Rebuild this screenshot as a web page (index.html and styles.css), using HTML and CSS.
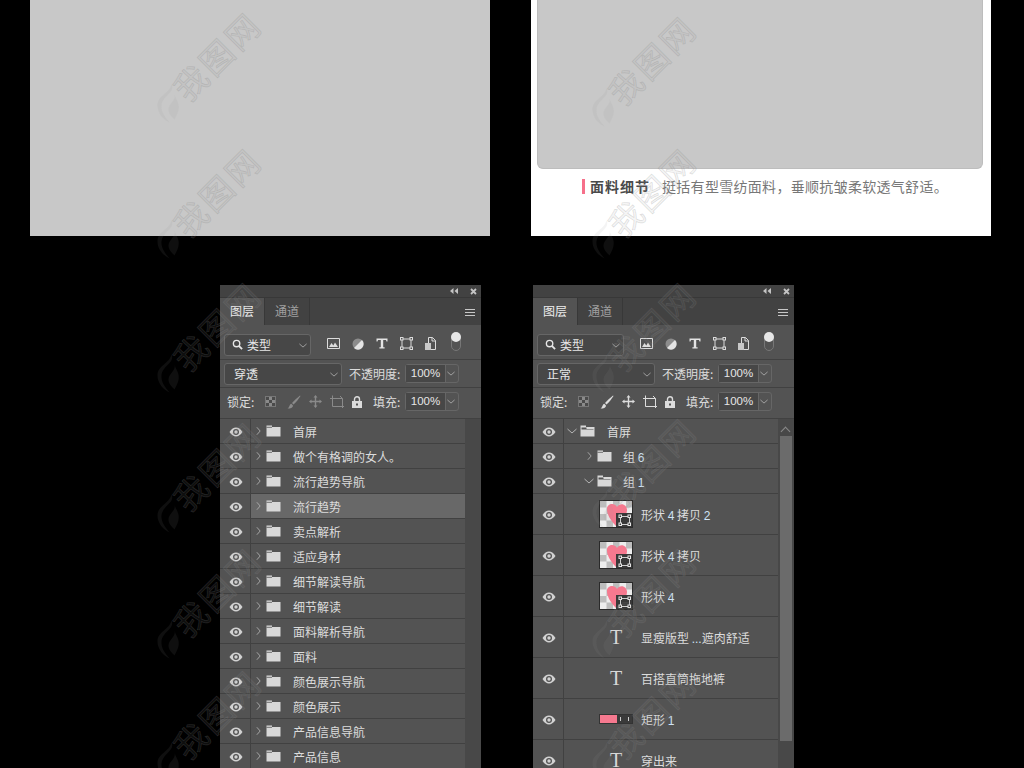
FILE: index.html
```html
<!DOCTYPE html>
<html lang="zh-CN">
<head>
  <meta charset="UTF-8">
  <title>图层面板</title>
  <link rel="stylesheet" href="styles.css">
</head>
<body>

  <svg class="defs" width="0" height="0">
    <symbol id="eye" viewBox="0 0 14 10">
      <path d="M0.5 5C2.5 2 4.6 0.6 7 0.6S11.5 2 13.5 5C11.5 8 9.4 9.4 7 9.4S2.5 8 0.5 5Z" fill="#d2d2d2"/>
      <circle cx="7" cy="5" r="3" fill="#535353"/>
      <circle cx="7" cy="5" r="1.7" fill="#d2d2d2"/>
    </symbol>
    <symbol id="folder" viewBox="0 0 15 12">
      <path d="M0.5 0.5H6V2H14.5V11.5H0.5Z" fill="#d8d8d8"/>
      <path d="M0.5 2.3H6" stroke="#535353" stroke-width="0.8"/>
    </symbol>
    <symbol id="folder-open" viewBox="0 0 15 12">
      <path d="M0.5 0.5H6V2H14.5V11.5H0.5Z" fill="#d8d8d8"/>
      <path d="M1.5 2.6H6.5V4H13.5V4.6H1.5Z" fill="#535353"/>
    </symbol>
    <symbol id="chev-right" viewBox="0 0 6 10"><path d="M1 0.5L5 5L1 9.5" fill="none" stroke="#b4b4b4"/></symbol>
    <symbol id="chev-down" viewBox="0 0 10 6"><path d="M0.5 1L5 5L9.500 1" fill="none" stroke="#b4b4b4"/></symbol>
    <symbol id="flame" viewBox="0 0 24 40">
      <path d="M15 1C19 9 6 12 5 22C4.500 29 9 34 13 39C7 36 1 30 1 22C1 12 13 10 15 1ZM18 11C20 17 12 20 12 26C12 30 15 33 18 36C21 30 23 27 22 21C21 17 19 15 18 11Z" fill="currentColor"/>
    </symbol>
    <symbol id="shape-badge" viewBox="0 0 16 14">
      <rect width="16" height="14" fill="#383838"/>
      <path d="M4.500 3.500H13.500V11.500H4.500Z" fill="none" stroke="#cfcfcf"/>
      <g fill="#383838" stroke="#e4e4e4"><rect x="3" y="2" width="2.500" height="2.500"/><rect x="12" y="2" width="2.500" height="2.500"/><rect x="3" y="10" width="2.500" height="2.500"/><rect x="12" y="10" width="2.500" height="2.500"/></g>
    </symbol>
    <symbol id="thumb" viewBox="0 0 32 26">
      <rect width="32" height="26" fill="#ededed"/>
      <path d="M0 0H6.500V6.500H0ZM13 0H19.500V6.500H13ZM26 0H32V6.500H26ZM6.500 6.500H13V13H6.500ZM19.500 6.500H26V13H19.500ZM0 13H6.500V19.500H0ZM13 13H19.500V19.500H13ZM26 13H32V19.500H26ZM6.500 19.500H13V26H6.500ZM19.500 19.500H26V26H19.500Z" fill="#bdbdbd"/>
      <path d="M16 25C10 19 7 13 7 8C7 3 14 1 17 6C20 1 27 3 27 9C27 15 21 20 16 25Z" fill="#f6798f"/>
    </symbol>
    <symbol id="ic-image" viewBox="0 0 13 11"><path d="M0.500 0.500H12.500V10.500H0.500Z" fill="none" stroke="#dcdcdc"/><path d="M2 9L4.500 5L6.300 7.500L8 4.500L11 9Z" fill="#dcdcdc"/></symbol>
    <symbol id="ic-adjust" viewBox="0 0 12 12"><circle cx="6" cy="6" r="5.500" fill="#8c8c8c"/><path d="M10 2A5.500 5.500 0 0 1 2 10Z" fill="#e4e4e4"/></symbol>
    <symbol id="ic-type" viewBox="0 0 12 11"><path d="M0.500 0.500H11.500V3.500H10.500L10 2H7.200V9.300H8.600V10.500H3.400V9.300H4.800V2H2L1.500 3.500H0.500Z" fill="#e4e4e4"/></symbol>
    <symbol id="ic-shape" viewBox="0 0 13 13"><path d="M2 2H11V11H2Z" fill="none" stroke="#dcdcdc"/><g fill="#535353" stroke="#dcdcdc"><rect x="0.500" y="0.500" width="2.500" height="2.500"/><rect x="10" y="0.500" width="2.500" height="2.500"/><rect x="0.500" y="10" width="2.500" height="2.500"/><rect x="10" y="10" width="2.500" height="2.500"/></g></symbol>
    <symbol id="ic-smart" viewBox="0 0 11 13"><path d="M3.500 0.500H7.500L10.500 3.500V12.500H3.500Z" fill="none" stroke="#dcdcdc"/><path d="M7 0.500V4H10.500" fill="none" stroke="#dcdcdc"/><rect x="0" y="6" width="6" height="7" fill="#c8c8c8"/></symbol>
    <symbol id="lock-pixels" viewBox="0 0 11 11"><rect x="0.500" y="0.500" width="10" height="10" fill="#8a8a8a" stroke="#777"/><path d="M1 1H4V4H1ZM7 1H10V4H7ZM4 4H7V7H4ZM1 7H4V10H1ZM7 7H10V10H7Z" fill="#4a4a4a"/></symbol>
    <symbol id="lock-brush" viewBox="0 0 14 14"><path d="M13 0.500C10 3 7 5.500 5 8L6.500 9.500C9 7.500 11.500 4 13.500 1ZM4.300 8.700C2 9.500 3 12 0.500 13.500C4 14 6.500 12 5.800 10.200Z" fill="currentColor"/></symbol>
    <symbol id="lock-move" viewBox="0 0 13 13"><path d="M6.500 0L8.500 2.500H7.200V5.800H10.500V4.500L13 6.500L10.500 8.500V7.200H7.200V10.500H8.500L6.500 13L4.500 10.500H5.800V7.200H2.500V8.500L0 6.500L2.500 4.500V5.800H5.800V2.500H4.500Z" fill="currentColor"/></symbol>
    <symbol id="lock-crop" viewBox="0 0 14 14"><path d="M0 3.500H12.500V13M2.500 0.500V11.500H14M10 1L12.500 3.500" fill="none" stroke="currentColor"/></symbol>
    <symbol id="lock-lock" viewBox="0 0 10 12"><path d="M2.500 5V3.300A2.500 2.500 0 0 1 7.500 3.300V5" fill="none" stroke="#dcdcdc" stroke-width="1.400"/><rect y="5" width="10" height="7" fill="#dcdcdc"/><rect x="4" y="7.500" width="2" height="2" fill="#535353"/></symbol>
    <symbol id="collapse" viewBox="0 0 8 6"><path d="M3.500 0V6L0 3ZM8 0V6L4.500 3Z" fill="#c4c4c4"/></symbol>
    <symbol id="close" viewBox="0 0 7 7"><path d="M1 1L6 6M6 1L1 6" stroke="#c4c4c4" stroke-width="1.800"/></symbol>
  </svg>

  <main class="page">
    <div class="previews">
      <div class="preview-grey"></div>
      <div class="preview-white">
        <div class="preview-image"></div>
        <p class="caption"><b>面料细节</b><span>挺括有型雪纺面料，垂顺抗皱柔软透气舒适。</span></p>
      </div>
    </div>

    <div class="panels">
      <section class="panel panel-left">
        <div class="titlebar"><svg width="8" height="6"><use href="#collapse"/></svg><svg width="7" height="7"><use href="#close"/></svg></div>
        <div class="tabs">
          <div class="tab active">图层</div>
          <div class="tab">通道</div>
          <div class="menu"><i></i><i></i><i></i></div>
        </div>
        <div class="toolbar filter-row">
          <div class="select select-kind">
            <svg class="search" viewBox="0 0 12 12"><circle cx="5" cy="5" r="3.500" fill="none" stroke="#e6e6e6" stroke-width="1.500"/><path d="M7.500 7.500L11 11" stroke="#e6e6e6" stroke-width="2"/></svg>
            <span>类型</span>
            <svg class="chev"><use href="#chev-down"/></svg>
          </div>
          <div class="filter-icons">
            <svg width="13" height="11"><use href="#ic-image"/></svg>
            <svg width="12" height="12"><use href="#ic-adjust"/></svg>
            <svg width="12" height="11"><use href="#ic-type"/></svg>
            <svg width="13" height="13"><use href="#ic-shape"/></svg>
            <svg width="11" height="13"><use href="#ic-smart"/></svg>
          </div>
          <div class="toggle"></div>
        </div>
        <div class="toolbar mode-row">
          <div class="select select-mode"><span>穿透</span><svg class="chev"><use href="#chev-down"/></svg></div>
          <label>不透明度:</label>
          <div class="percent"><span>100%</span><svg class="chev"><use href="#chev-down"/></svg></div>
        </div>
        <div class="toolbar lock-row">
          <label class="lock-label">锁定:</label>
          <div class="lock-icons dim">
            <svg width="11" height="11"><use href="#lock-pixels"/></svg>
            <svg width="14" height="14"><use href="#lock-brush"/></svg>
            <svg width="13" height="13"><use href="#lock-move"/></svg>
            <svg width="14" height="14"><use href="#lock-crop"/></svg>
            <svg width="10" height="12"><use href="#lock-lock"/></svg>
          </div>
          <label class="fill-label">填充:</label>
          <div class="percent"><span>100%</span><svg class="chev"><use href="#chev-down"/></svg></div>
        </div>
        <div class="layers">
          <ul class="rows">
            <li class="row"><span class="eye"><svg width="14" height="10"><use href="#eye"/></svg></span><svg class="arrow"><use href="#chev-right"/></svg><svg class="folder"><use href="#folder"/></svg><span class="name">首屏</span></li>
            <li class="row"><span class="eye"><svg width="14" height="10"><use href="#eye"/></svg></span><svg class="arrow"><use href="#chev-right"/></svg><svg class="folder"><use href="#folder"/></svg><span class="name">做个有格调的女人。</span></li>
            <li class="row"><span class="eye"><svg width="14" height="10"><use href="#eye"/></svg></span><svg class="arrow"><use href="#chev-right"/></svg><svg class="folder"><use href="#folder"/></svg><span class="name">流行趋势导航</span></li>
            <li class="row selected"><span class="eye"><svg width="14" height="10"><use href="#eye"/></svg></span><svg class="arrow"><use href="#chev-right"/></svg><svg class="folder"><use href="#folder"/></svg><span class="name">流行趋势</span></li>
            <li class="row"><span class="eye"><svg width="14" height="10"><use href="#eye"/></svg></span><svg class="arrow"><use href="#chev-right"/></svg><svg class="folder"><use href="#folder"/></svg><span class="name">卖点解析</span></li>
            <li class="row"><span class="eye"><svg width="14" height="10"><use href="#eye"/></svg></span><svg class="arrow"><use href="#chev-right"/></svg><svg class="folder"><use href="#folder"/></svg><span class="name">适应身材</span></li>
            <li class="row"><span class="eye"><svg width="14" height="10"><use href="#eye"/></svg></span><svg class="arrow"><use href="#chev-right"/></svg><svg class="folder"><use href="#folder"/></svg><span class="name">细节解读导航</span></li>
            <li class="row"><span class="eye"><svg width="14" height="10"><use href="#eye"/></svg></span><svg class="arrow"><use href="#chev-right"/></svg><svg class="folder"><use href="#folder"/></svg><span class="name">细节解读</span></li>
            <li class="row"><span class="eye"><svg width="14" height="10"><use href="#eye"/></svg></span><svg class="arrow"><use href="#chev-right"/></svg><svg class="folder"><use href="#folder"/></svg><span class="name">面料解析导航</span></li>
            <li class="row"><span class="eye"><svg width="14" height="10"><use href="#eye"/></svg></span><svg class="arrow"><use href="#chev-right"/></svg><svg class="folder"><use href="#folder"/></svg><span class="name">面料</span></li>
            <li class="row"><span class="eye"><svg width="14" height="10"><use href="#eye"/></svg></span><svg class="arrow"><use href="#chev-right"/></svg><svg class="folder"><use href="#folder"/></svg><span class="name">颜色展示导航</span></li>
            <li class="row"><span class="eye"><svg width="14" height="10"><use href="#eye"/></svg></span><svg class="arrow"><use href="#chev-right"/></svg><svg class="folder"><use href="#folder"/></svg><span class="name">颜色展示</span></li>
            <li class="row"><span class="eye"><svg width="14" height="10"><use href="#eye"/></svg></span><svg class="arrow"><use href="#chev-right"/></svg><svg class="folder"><use href="#folder"/></svg><span class="name">产品信息导航</span></li>
            <li class="row"><span class="eye"><svg width="14" height="10"><use href="#eye"/></svg></span><svg class="arrow"><use href="#chev-right"/></svg><svg class="folder"><use href="#folder"/></svg><span class="name">产品信息</span></li>
          </ul>
          <div class="scrollbar"></div>
        </div>
      </section>

      <section class="panel panel-right">
        <div class="titlebar"><svg width="8" height="6"><use href="#collapse"/></svg><svg width="7" height="7"><use href="#close"/></svg></div>
        <div class="tabs">
          <div class="tab active">图层</div>
          <div class="tab">通道</div>
          <div class="menu"><i></i><i></i><i></i></div>
        </div>
        <div class="toolbar filter-row">
          <div class="select select-kind">
            <svg class="search" viewBox="0 0 12 12"><circle cx="5" cy="5" r="3.500" fill="none" stroke="#e6e6e6" stroke-width="1.500"/><path d="M7.500 7.500L11 11" stroke="#e6e6e6" stroke-width="2"/></svg>
            <span>类型</span>
            <svg class="chev"><use href="#chev-down"/></svg>
          </div>
          <div class="filter-icons">
            <svg width="13" height="11"><use href="#ic-image"/></svg>
            <svg width="12" height="12"><use href="#ic-adjust"/></svg>
            <svg width="12" height="11"><use href="#ic-type"/></svg>
            <svg width="13" height="13"><use href="#ic-shape"/></svg>
            <svg width="11" height="13"><use href="#ic-smart"/></svg>
          </div>
          <div class="toggle"></div>
        </div>
        <div class="toolbar mode-row">
          <div class="select select-mode"><span>正常</span><svg class="chev"><use href="#chev-down"/></svg></div>
          <label>不透明度:</label>
          <div class="percent"><span>100%</span><svg class="chev"><use href="#chev-down"/></svg></div>
        </div>
        <div class="toolbar lock-row">
          <label class="lock-label">锁定:</label>
          <div class="lock-icons">
            <svg width="11" height="11"><use href="#lock-pixels"/></svg>
            <svg width="14" height="14"><use href="#lock-brush"/></svg>
            <svg width="13" height="13"><use href="#lock-move"/></svg>
            <svg width="14" height="14"><use href="#lock-crop"/></svg>
            <svg width="10" height="12"><use href="#lock-lock"/></svg>
          </div>
          <label class="fill-label">填充:</label>
          <div class="percent"><span>100%</span><svg class="chev"><use href="#chev-down"/></svg></div>
        </div>
        <div class="layers">
          <ul class="rows">
            <li class="row"><span class="eye"><svg width="14" height="10"><use href="#eye"/></svg></span><svg class="arrow-down"><use href="#chev-down"/></svg><svg class="folder"><use href="#folder-open"/></svg><span class="name">首屏</span></li>
            <li class="row depth1"><span class="eye"><svg width="14" height="10"><use href="#eye"/></svg></span><svg class="arrow"><use href="#chev-right"/></svg><svg class="folder"><use href="#folder"/></svg><span class="name">组 <em>6</em></span></li>
            <li class="row depth1"><span class="eye"><svg width="14" height="10"><use href="#eye"/></svg></span><svg class="arrow-down"><use href="#chev-down"/></svg><svg class="folder"><use href="#folder-open"/></svg><span class="name">组 <em>1</em></span></li>
            <li class="row tall"><span class="eye"><svg width="14" height="10"><use href="#eye"/></svg></span><span class="thumb"><svg width="32" height="26"><use href="#thumb"/></svg><svg class="badge"><use href="#shape-badge"/></svg></span><span class="name">形状 <em>4</em> 拷贝 <em>2</em></span></li>
            <li class="row tall"><span class="eye"><svg width="14" height="10"><use href="#eye"/></svg></span><span class="thumb"><svg width="32" height="26"><use href="#thumb"/></svg><svg class="badge"><use href="#shape-badge"/></svg></span><span class="name">形状 <em>4</em> 拷贝</span></li>
            <li class="row tall"><span class="eye"><svg width="14" height="10"><use href="#eye"/></svg></span><span class="thumb"><svg width="32" height="26"><use href="#thumb"/></svg><svg class="badge"><use href="#shape-badge"/></svg></span><span class="name">形状 <em>4</em></span></li>
            <li class="row tall"><span class="eye"><svg width="14" height="10"><use href="#eye"/></svg></span><span class="text-thumb">T</span><span class="name">显瘦版型 <em>...</em>遮肉舒适</span></li>
            <li class="row tall"><span class="eye"><svg width="14" height="10"><use href="#eye"/></svg></span><span class="text-thumb">T</span><span class="name">百搭直筒拖地裤</span></li>
            <li class="row tall"><span class="eye"><svg width="14" height="10"><use href="#eye"/></svg></span><span class="rect-thumb"><i></i><b></b></span><span class="name">矩形 <em>1</em></span></li>
            <li class="row tall"><span class="eye"><svg width="14" height="10"><use href="#eye"/></svg></span><span class="text-thumb">T</span><span class="name">穿出来</span></li>
          </ul>
          <div class="scrollbar"><span class="scroll-up"></span><div class="scroll-thumb"></div></div>
        </div>
      </section>
    </div>

    <div class="watermarks" aria-hidden="true">
      <div class="wm wm-1"><svg width="24" height="40"><use href="#flame"/></svg><span>我图网</span></div>
      <div class="wm wm-2"><svg width="24" height="40"><use href="#flame"/></svg><span>我图网</span></div>
      <div class="wm wm-3"><svg width="24" height="40"><use href="#flame"/></svg><span>我图网</span></div>
      <div class="wm wm-4"><svg width="24" height="40"><use href="#flame"/></svg><span>我图网</span></div>
      <div class="wm wm-5"><svg width="24" height="40"><use href="#flame"/></svg><span>我图网</span></div>
      <div class="wm wm-6"><svg width="24" height="40"><use href="#flame"/></svg><span>我图网</span></div>
      <div class="wm wm-7"><svg width="24" height="40"><use href="#flame"/></svg><span>我图网</span></div>
      <div class="wm wm-8"><svg width="24" height="40"><use href="#flame"/></svg><span>我图网</span></div>
      <div class="wm wm-9"><svg width="24" height="40"><use href="#flame"/></svg><span>我图网</span></div>
      <div class="wm wm-10"><svg width="24" height="40"><use href="#flame"/></svg><span>我图网</span></div>
      <div class="wm wm-11"><svg width="24" height="40"><use href="#flame"/></svg><span>我图网</span></div>
      <div class="wm wm-12"><svg width="24" height="40"><use href="#flame"/></svg><span>我图网</span></div>
    </div>
  </main>

</body>
</html>
```

FILE: styles.css
```css
* {
  box-sizing: border-box;
}

html, body {
  margin: 0;
  height: 768px;
  overflow: hidden;
  background-color: #000;
}

body {
  font-family: "Noto Sans CJK SC", "Liberation Sans", sans-serif;
  font-size: 12px;
  color: #dcdcdc;
}

.defs {
  position: absolute;
}

.page {
  position: relative;
  width: 1024px;
  height: 768px;
  overflow: hidden;
}

/* top images */
.previews {
  display: flex;
  gap: 41px;
  padding-left: 30px;
}

.preview-grey {
  width: 460px;
  height: 236px;
  background-color: #c8c8c8;
}

.preview-white {
  width: 460px;
  height: 236px;
  background-color: #fff;
  padding: 0 8px 0 6px;
}

.preview-image {
  height: 169px;
  background-color: #c8c8c8;
  border: 1px solid #bdbdbd;
  border-top: none;
  border-radius: 0 0 6px 6px;
}

.caption {
  margin: 10px 0 0 45px;
  padding-left: 5px;
  border-left: 3px solid #f6708a;
  height: 15px;
  line-height: 15px;
  font-size: 14px;
  color: #777;
  display: flex;
  gap: 12px;
  white-space: nowrap;
}

.caption b {
  color: #4a4a4a;
  letter-spacing: 1px;
}

.caption span {
  letter-spacing: 0.3px;
}

/* layer panels */
.panels {
  display: flex;
  gap: 52px;
  padding: 49px 0 0 220px;
}

.panel {
  width: 261px;
  height: 560px;
  background-color: #535353;
  flex-shrink: 0;
}

.titlebar {
  height: 13px;
  background-color: #424242;
  border-bottom: 1px solid #383838;
  display: flex;
  justify-content: flex-end;
  align-items: center;
  gap: 12px;
  padding-right: 4px;
}

.tabs {
  height: 27px;
  background-color: #424242;
  display: flex;
  align-items: stretch;
}

.tab {
  width: 45px;
  line-height: 26px;
  text-align: center;
  color: #a0a0a0;
  border-right: 1px solid #383838;
}

.tab.active {
  background-color: #535353;
  color: #eee;
}

.menu {
  margin-left: auto;
  padding: 11px 6px 0 0;
}

.menu i {
  display: block;
  width: 10px;
  height: 1px;
  background-color: #c8c8c8;
  margin-bottom: 2px;
}

.toolbar {
  display: flex;
  align-items: center;
  border-bottom: 1px solid #414141;
}

.filter-row {
  height: 35px;
  padding: 5px 0 0 4px;
}

.mode-row {
  height: 28px;
  padding-left: 4px;
}

.lock-row {
  height: 31px;
  padding: 0 0 3px 7px;
}

.select {
  display: flex;
  align-items: center;
  height: 22px;
  background-color: #474747;
  border: 1px solid #666;
  border-radius: 3px;
  position: relative;
  color: #e6e6e6;
}

.select-kind {
  width: 87px;
  padding-left: 7px;
}

.select-mode {
  width: 118px;
  padding-left: 9px;
}

.search {
  width: 11px;
  height: 11px;
  margin-right: 4px;
}

.chev {
  width: 8px;
  height: 5px;
  position: absolute;
  right: 3px;
  top: 8px;
}

.filter-icons {
  display: flex;
  align-items: center;
  gap: 12px;
  margin: -2px 0 0 16px;
  width: 110px;
}

.toggle {
  width: 10px;
  height: 18px;
  margin: -5px 0 0 14px;
  border: 1px solid #777;
  border-radius: 5px;
  position: relative;
}

.toggle::before {
  content: "";
  position: absolute;
  left: -1px;
  top: -2px;
  width: 10px;
  height: 10px;
  border-radius: 50%;
  background-color: #e6e6e6;
}

.mode-row label {
  margin-left: 7px;
  width: 54px;
  white-space: nowrap;
}

.percent {
  height: 19px;
  width: 54px;
  margin-left: 2px;
  border: 1px solid #666;
  border-radius: 3px;
  display: flex;
  position: relative;
  line-height: 17px;
}

.percent span {
  width: 40px;
  background-color: #474747;
  text-align: center;
  border-right: 1px solid #666;
  font-family: "Liberation Sans", sans-serif;
  font-size: 11.500px;
  color: #e6e6e6;
}

.percent .chev {
  top: 6px;
}

.lock-label {
  width: 38px;
  white-space: nowrap;
}

.lock-icons {
  display: flex;
  align-items: center;
  gap: 8px;
  color: #dcdcdc;
  width: 108px;
}

.lock-icons svg:first-child {
  margin-right: 3px;
}

.lock-icons.dim svg {
  color: #8a8a8a;
}

.fill-label {
  width: 30px;
  white-space: nowrap;
}

.layers {
  display: flex;
}

.rows {
  list-style: none;
  margin: 0;
  padding: 0;
  width: 245px;
}

.row {
  height: 25px;
  display: flex;
  align-items: center;
  border-bottom: 1px solid #414141;
  white-space: nowrap;
}

.row.tall {
  height: 41px;
}

.eye {
  width: 31px;
  height: 100%;
  flex-shrink: 0;
  display: flex;
  align-items: center;
  justify-content: center;
  padding: 1px 0 0 2px;
  border-right: 1px solid #414141;
}

.row.selected {
  background-color: #686868;
}

.row.selected .eye {
  background-color: #535353;
}

.arrow {
  width: 5px;
  height: 10px;
  margin: 0 5px;
}

.arrow-down {
  width: 10px;
  height: 6px;
  margin: 0 3px;
}

.folder {
  width: 15px;
  height: 12px;
  margin-right: 12px;
}

.depth1 .arrow {
  margin-left: 23px;
}

.depth1 .arrow-down {
  margin-left: 20px;
}

.depth1 .folder {
  margin-right: 11px;
}

.name em {
  font-style: normal;
  font-family: "Liberation Sans", sans-serif;
  color: #cfe3f5;
}

.thumb {
  position: relative;
  width: 32px;
  height: 26px;
  margin: 0 9px 0 36px;
  outline: 1px solid #2a2a2a;
  display: block;
}

.thumb > svg {
  display: block;
}

.thumb .badge {
  position: absolute;
  right: 0;
  bottom: 0;
  width: 16px;
  height: 14px;
}

.text-thumb {
  width: 32px;
  margin: 0 9px 0 36px;
  text-align: center;
  font-family: "Liberation Serif", serif;
  font-size: 20px;
  line-height: 14px;
  color: #d8d8d8;
}

.rect-thumb {
  width: 32px;
  height: 8px;
  margin: 0 9px 0 36px;
  background-color: #3a3a3a;
  outline: 1px solid #333;
  display: flex;
  align-items: center;
}

.rect-thumb i {
  display: block;
  width: 17px;
  height: 100%;
  background-color: #f6798f;
}

.rect-thumb b {
  display: block;
  width: 9px;
  height: 4px;
  margin-left: 3px;
  border-left: 1px solid #ccc;
  border-right: 1px solid #ccc;
}

.scrollbar {
  width: 16px;
  height: 349px;
  background-color: #484848;
  position: relative;
}

.scroll-up {
  display: block;
  height: 17px;
}

.scroll-up::before {
  content: "";
  position: absolute;
  left: 4px;
  top: 9px;
  width: 6px;
  height: 6px;
  border-left: 1px solid #8a8a8a;
  border-top: 1px solid #8a8a8a;
  transform: rotate(45deg);
}

.scroll-thumb {
  margin-left: 2px;
  width: 12px;
  height: 305px;
  background-color: #6b6b6b;
}

/* site watermark laid over the screenshot */
.watermarks {
  position: absolute;
  inset: 0;
  pointer-events: none;
}

.wm {
  position: absolute;
  display: flex;
  align-items: center;
  gap: 2px;
  transform: rotate(-45deg);
  transform-origin: left center;
  color: rgba(150, 150, 150, 0.1);
  -webkit-text-stroke: 0.7px rgba(130, 130, 130, 0.26);
  font-size: 33px;
  font-weight: 400;
  letter-spacing: 3px;
  white-space: nowrap;
  line-height: 36px;
}

.wm svg {
  transform: rotate(45deg);
}

.wm-1 { left: 160px; top: 92px; }
.wm-2 { left: 160px; top: 228px; }
.wm-3 { left: 160px; top: 362px; }
.wm-4 { left: 160px; top: 502px; }
.wm-5 { left: 160px; top: 628px; }
.wm-6 { left: 160px; top: 750px; }
.wm-7 { left: 595px; top: 96px; }
.wm-8 { left: 595px; top: 228px; }
.wm-9 { left: 595px; top: 362px; }
.wm-10 { left: 595px; top: 498px; }
.wm-11 { left: 595px; top: 628px; }
.wm-12 { left: 595px; top: 750px; }
```
